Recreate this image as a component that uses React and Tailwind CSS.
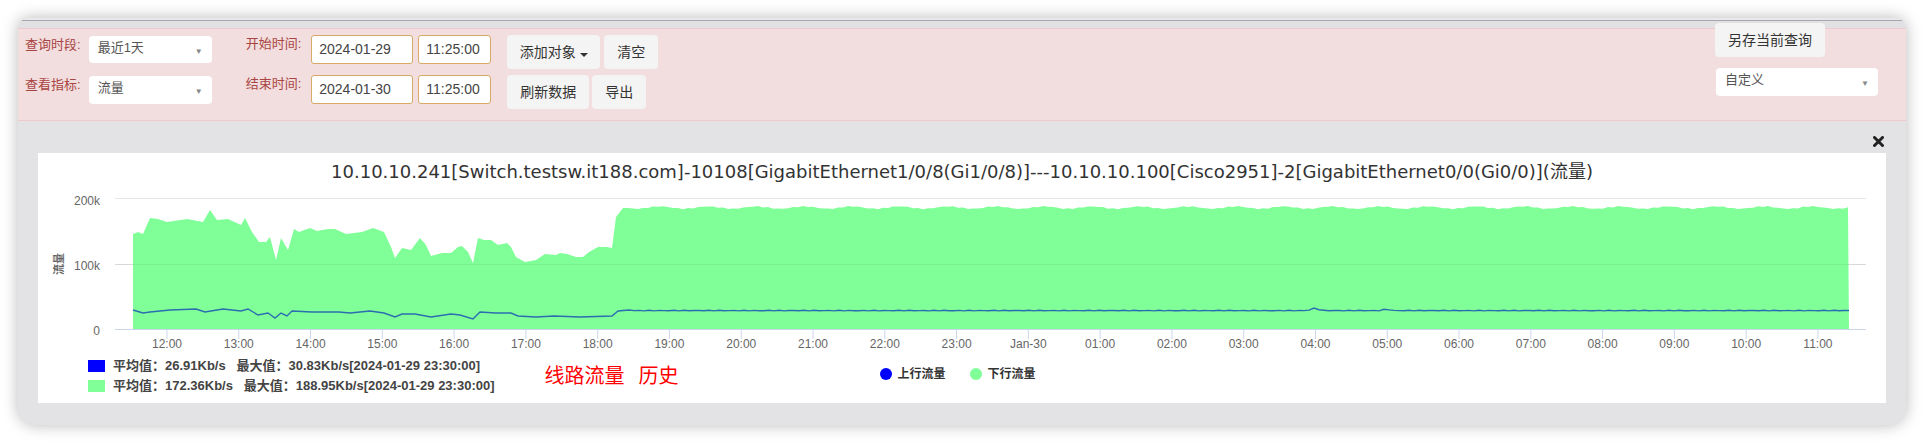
const FONT = { fontFamily: '"Liberation Sans", "Noto Sans CJK SC", sans-serif' }
const TITLE_FONT = { fontFamily: '"DejaVu Sans", "Noto Sans CJK SC", sans-serif' }

const hourLabels = [
  '12:00', '13:00', '14:00', '15:00', '16:00', '17:00', '18:00', '19:00', '20:00', '21:00', '22:00', '23:00',
  'Jan-30', '01:00', '02:00', '03:00', '04:00', '05:00', '06:00', '07:00', '08:00', '09:00', '10:00', '11:00',
]

// chart coordinates are page pixels; the svg starts at x=38, y=188
const OX = 38
const OY = 188

const downRough = [
  [133, 234], [138, 232], [143, 234], [150, 218], [158, 219], [167, 222], [187, 219], [203, 222],
  [210, 210], [217, 220], [228, 219], [241, 225], [245, 218], [252, 232], [259, 242], [266, 242],
  [270, 237], [276, 260], [281, 238], [288, 250], [294, 229], [299, 232], [310, 228], [317, 231],
  [328, 229], [335, 229], [346, 234], [362, 232], [373, 228], [384, 232], [391, 247], [395, 258],
  [402, 248], [411, 250], [420, 238], [426, 245], [431, 256], [442, 253], [451, 253], [458, 247],
  [462, 246], [468, 252], [473, 263], [478, 238], [484, 240], [491, 240], [498, 245], [507, 243],
  [511, 247], [516, 257], [525, 262], [536, 260], [545, 254], [556, 255], [560, 253], [567, 254],
  [576, 257], [583, 257], [589, 252], [598, 247], [607, 247], [612, 248], [616, 217], [623, 208],
]

const upRough = [
  [133, 310], [143, 313], [150, 312], [170, 310], [196, 309], [205, 312], [223, 309], [241, 311],
  [248, 309], [258, 315], [268, 313], [275, 318], [281, 313], [287, 316], [292, 311], [312, 312],
  [339, 312], [350, 313], [370, 311], [384, 313], [395, 317], [402, 314], [415, 314], [431, 317],
  [451, 314], [460, 315], [473, 319], [480, 312], [496, 313], [511, 313], [518, 316], [536, 317],
  [554, 316], [580, 317], [612, 316], [618, 311], [629, 310],
]

function buildDown() {
  const pts = [...downRough]
  for (let x = 628; x <= 1849; x += 5) {
    const y = 207.6 + 1.2 * Math.sin((x * 2 * Math.PI) / 48) + 0.5 * Math.sin(x * 0.71)
    pts.push([x, y])
  }
  return pts
}

function buildUp() {
  const pts = [...upRough]
  for (let x = 634; x <= 1849; x += 5) {
    let y = 310.6 + 0.35 * Math.sin(x * 0.53)
    if (Math.abs(x - 1315) < 8) y -= 2.5 * (1 - Math.abs(x - 1315) / 8)
    if (Math.abs(x - 1386) < 6) y -= 1
    pts.push([x, y])
  }
  return pts
}

const toPath = (pts) => pts.map(([x, y], i) => `${i ? 'L' : 'M'}${(x - OX).toFixed(1)} ${(y - OY).toFixed(1)}`).join(' ')

function TrafficChart() {
  const down = buildDown()
  const up = buildUp()
  const area = `${toPath(down)} L${1849 - OX} ${329 - OY} L${133 - OX} ${329 - OY} Z`
  return (
    <svg width="1848" height="168" className="block" style={FONT}>
      <line x1={115 - OX} x2={1866 - OX} y1={198.5 - OY} y2={198.5 - OY} stroke="#e6e6e6" />
      <line x1={115 - OX} x2={1866 - OX} y1={264.5 - OY} y2={264.5 - OY} stroke="#e6e6e6" />
      <path d={area} fill="#80ff99" />
      <line x1={115 - OX} x2={1866 - OX} y1={264.5 - OY} y2={264.5 - OY} stroke="#000" strokeOpacity="0.06" />
      <path d={toPath(up)} fill="none" stroke="#2b6db0" strokeWidth="1.4" />
      <line x1={115 - OX} x2={1866 - OX} y1={329.5 - OY} y2={329.5 - OY} stroke="#ccd6eb" />
      {hourLabels.map((h, i) => {
        const x = 167 + i * 71.78 - OX
        return (
          <g key={h}>
            <line x1={x} x2={x} y1={329 - OY} y2={339 - OY} stroke="#ccd6eb" />
            <text x={x} y={348 - OY} textAnchor="middle" fontSize="12" fill="#666">{h}</text>
          </g>
        )
      })}
      <text x={100 - OX} y={205 - OY} textAnchor="end" fontSize="12" fill="#666">200k</text>
      <text x={100 - OX} y={270 - OY} textAnchor="end" fontSize="12" fill="#666">100k</text>
      <text x={100 - OX} y={335 - OY} textAnchor="end" fontSize="12" fill="#666">0</text>
      <text
        x={0}
        y={0}
        transform={`translate(${63 - OX} ${264 - OY}) rotate(-90)`}
        textAnchor="middle"
        fontSize="11"
        fontWeight="bold"
        fill="#666"
      >
        流量
      </text>
    </svg>
  )
}

function FakeSelect({ value, className = '' }) {
  return (
    <div className={`relative rounded-[4px] bg-white text-[13px] text-[#555] ${className}`}>
      <span className="absolute left-[9px] top-[3px] leading-[18px]">{value}</span>
      <span className="absolute right-[9px] top-[12px] text-[8px] leading-[8px] text-[#888]">▼</span>
    </div>
  )
}

function Field({ value, className = '' }) {
  return (
    <div className={`flex h-[29px] items-center rounded-[3px] border border-[#d6aa66] bg-white pl-[7px] text-[14px] text-[#444] ${className}`}>
      {value}
    </div>
  )
}

function Btn({ children, className = '' }) {
  return (
    <div className={`flex h-[34px] items-center justify-center rounded-[4px] bg-[#f5f4f4] text-[14px] text-[#333] ${className}`}>
      {children}
    </div>
  )
}

export default function App() {
  return (
    <div className="h-[444px] w-full overflow-hidden bg-white pl-[18px] pt-[18px]" style={FONT}>
      <div className="flex h-[407px] w-[1888px] flex-col overflow-hidden rounded-t-[11px] rounded-b-[18px] bg-[#e3e3e5] shadow-[0_0_16px_rgba(0,0,0,0.28)]">
        <div className="h-[2px] bg-[#e9e9ec]" />
        <div className="h-[1px] bg-[#a6a7ae]" />
        <div className="h-[7px] bg-[#e1e1e3]" />

        {/* query bar */}
        <div className="flex h-[93px] items-start border-y border-[#efc9cb] bg-[#f2dede] pl-[7px] pr-[28px]">
          <div className="flex flex-col pt-[7px] text-[13px] leading-[18px] text-[#a94442]">
            <span>查询时段:</span>
            <span className="mt-[22px]">查看指标:</span>
          </div>
          <div className="ml-[8px] flex flex-col pt-[7px]">
            <FakeSelect value="最近1天" className="h-[27px] w-[123px]" />
            <FakeSelect value="流量" className="mt-[13px] h-[28px] w-[123px]" />
          </div>
          <div className="ml-[34px] flex flex-col pt-[6px] text-[13px] leading-[18px] text-[#a94442]">
            <span>开始时间:</span>
            <span className="mt-[22px]">结束时间:</span>
          </div>
          <div className="ml-[10px] flex flex-col pt-[6px]">
            <Field value="2024-01-29" className="w-[102px]" />
            <Field value="2024-01-30" className="mt-[11px] w-[102px]" />
          </div>
          <div className="ml-[5px] flex flex-col pt-[6px]">
            <Field value="11:25:00" className="w-[73px]" />
            <Field value="11:25:00" className="mt-[11px] w-[73px]" />
          </div>
          <div className="ml-[16px] flex flex-col gap-[6px] pt-[6px]">
            <div className="flex gap-[4px]">
              <Btn className="w-[93px]">
                添加对象
                <span className="ml-[4px] mt-[5px] inline-block h-0 w-0 border-x-[4px] border-t-[4px] border-x-transparent border-t-[#333]" />
              </Btn>
              <Btn className="w-[54px]">清空</Btn>
            </div>
            <div className="flex gap-[3px]">
              <Btn className="w-[82px]">刷新数据</Btn>
              <Btn className="w-[54px]">导出</Btn>
            </div>
          </div>
          <div className="ml-auto mt-[-6px] flex flex-col">
            <Btn className="w-[110px]">另存当前查询</Btn>
            <FakeSelect value="自定义" className="ml-[1px] mt-[11px] h-[28px] w-[162px]" />
          </div>
        </div>

        {/* chart area */}
        <div className="px-[20px]">
          <div className="flex h-[32px] justify-end pr-[2px] pt-[15px]">
            <svg width="11" height="11" viewBox="0 0 11 11">
              <path d="M1.5 1.5 L9.5 9.5 M9.5 1.5 L1.5 9.5" stroke="#222" strokeWidth="3" strokeLinecap="round" />
            </svg>
          </div>
          <div className="h-[250px] w-[1848px] bg-white">
            <div className="h-[35px] pt-[7px] text-center text-[18px] leading-[24px] text-[#333]" style={TITLE_FONT}>
              10.10.10.241[Switch.testsw.it188.com]-10108[GigabitEthernet1/0/8(Gi1/0/8)]---10.10.10.100[Cisco2951]-2[GigabitEthernet0/0(Gi0/0)](流量)
            </div>
            <TrafficChart />
            <div className="flex items-center pl-[50px]">
              <div className="flex flex-col text-[13px] font-bold leading-[20px] text-[#444]">
                <div className="flex items-center">
                  <span className="mr-[8px] h-[12px] w-[17px] bg-[#0000ff]" />
                  平均值：26.91Kb/s&nbsp;&nbsp;&nbsp;最大值：30.83Kb/s[2024-01-29 23:30:00]
                </div>
                <div className="flex items-center">
                  <span className="mr-[8px] h-[12px] w-[17px] bg-[#80ff99]" />
                  平均值：172.36Kb/s&nbsp;&nbsp;&nbsp;最大值：188.95Kb/s[2024-01-29 23:30:00]
                </div>
              </div>
              <div className="ml-[50px] text-[20px] leading-[26px] text-[#ff0000]">
                线路流量<span className="ml-[14px]">历史</span>
              </div>
              <div className="ml-[201px] mt-[-4px] flex items-center text-[12px] font-bold text-[#333]">
                <span className="h-[12px] w-[12px] rounded-full bg-[#0000ff]" />
                <span className="ml-[6px]">上行流量</span>
                <span className="ml-[24px] h-[12px] w-[12px] rounded-full bg-[#80ff99]" />
                <span className="ml-[6px]">下行流量</span>
              </div>
            </div>
          </div>
        </div>
      </div>
    </div>
  )
}
